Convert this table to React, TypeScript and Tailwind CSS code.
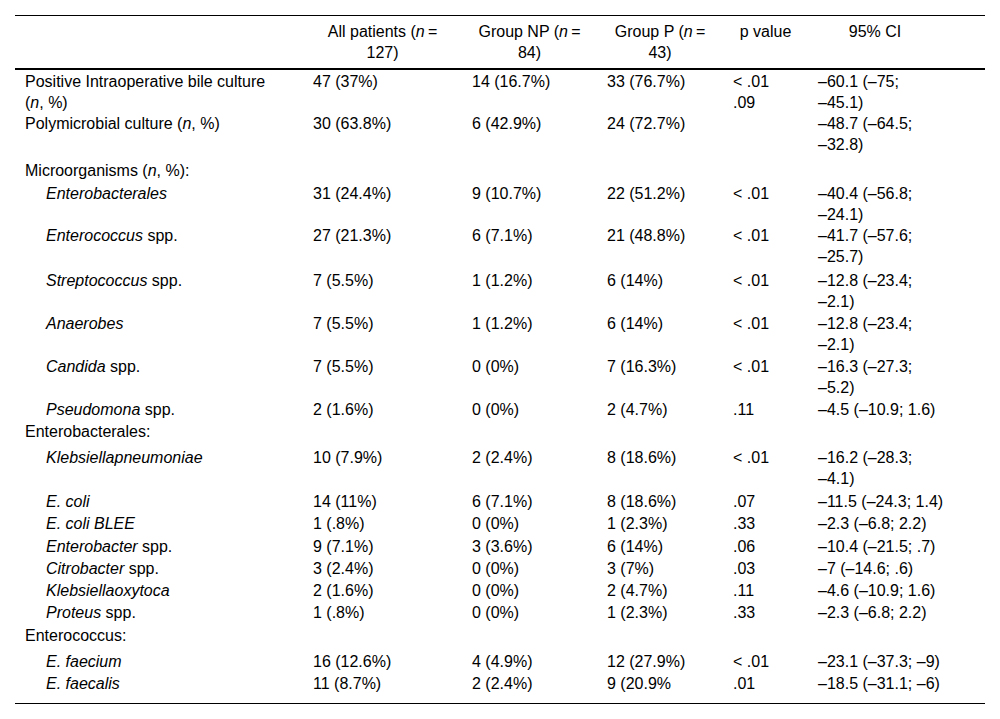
import React from "react";

type Row = {
  label: React.ReactNode;
  indent?: boolean;
  cells?: React.ReactNode[];
  pt: string;
  pb?: string;
};

const rows: Row[] = [
  {
    label: (
      <>
        Positive Intraoperative bile culture
        <br />(<i>n</i>, %)
      </>
    ),
    cells: [
      "47 (37%)",
      "14 (16.7%)",
      "33 (76.7%)",
      <>
        &lt; .01
        <br />
        .09
      </>,
      <>
        –60.1 (–75;
        <br />
        –45.1)
      </>,
    ],
    pt: "pt-[1px]",
  },
  {
    label: (
      <>
        Polymicrobial culture (<i>n</i>, %)
      </>
    ),
    cells: [
      "30 (63.8%)",
      "6 (42.9%)",
      "24 (72.7%)",
      "",
      <>
        –48.7 (–64.5;
        <br />
        –32.8)
      </>,
    ],
    pt: "pt-0",
  },
  {
    label: (
      <>
        Microorganisms (<i>n</i>, %):
      </>
    ),
    pt: "pt-[5px]",
  },
  {
    label: <i>Enterobacterales</i>,
    indent: true,
    cells: [
      "31 (24.4%)",
      "9 (10.7%)",
      "22 (51.2%)",
      "< .01",
      <>
        –40.4 (–56.8;
        <br />
        –24.1)
      </>,
    ],
    pt: "pt-[2px]",
  },
  {
    label: (
      <>
        <i>Enterococcus</i> spp.
      </>
    ),
    indent: true,
    cells: [
      "27 (21.3%)",
      "6 (7.1%)",
      "21 (48.8%)",
      "< .01",
      <>
        –41.7 (–57.6;
        <br />
        –25.7)
      </>,
    ],
    pt: "pt-0",
  },
  {
    label: (
      <>
        <i>Streptococcus</i> spp.
      </>
    ),
    indent: true,
    cells: [
      "7 (5.5%)",
      "1 (1.2%)",
      "6 (14%)",
      "< .01",
      <>
        –12.8 (–23.4;
        <br />
        –2.1)
      </>,
    ],
    pt: "pt-[3px]",
  },
  {
    label: <i>Anaerobes</i>,
    indent: true,
    cells: [
      "7 (5.5%)",
      "1 (1.2%)",
      "6 (14%)",
      "< .01",
      <>
        –12.8 (–23.4;
        <br />
        –2.1)
      </>,
    ],
    pt: "pt-[1px]",
  },
  {
    label: (
      <>
        <i>Candida</i> spp.
      </>
    ),
    indent: true,
    cells: [
      "7 (5.5%)",
      "0 (0%)",
      "7 (16.3%)",
      "< .01",
      <>
        –16.3 (–27.3;
        <br />
        –5.2)
      </>,
    ],
    pt: "pt-[1px]",
  },
  {
    label: (
      <>
        <i>Pseudomona</i> spp.
      </>
    ),
    indent: true,
    cells: ["2 (1.6%)", "0 (0%)", "2 (4.7%)", ".11", "–4.5 (–10.9; 1.6)"],
    pt: "pt-[1px]",
  },
  { label: "Enterobacterales:", pt: "pt-[1px]" },
  {
    label: <i>Klebsiellapneumoniae</i>,
    indent: true,
    cells: [
      "10 (7.9%)",
      "2 (2.4%)",
      "8 (18.6%)",
      "< .01",
      <>
        –16.2 (–28.3;
        <br />
        –4.1)
      </>,
    ],
    pt: "pt-[5px]",
  },
  {
    label: <i>E. coli</i>,
    indent: true,
    cells: ["14 (11%)", "6 (7.1%)", "8 (18.6%)", ".07", "–11.5 (–24.3; 1.4)"],
    pt: "pt-[2px]",
  },
  {
    label: <i>E. coli BLEE</i>,
    indent: true,
    cells: ["1 (.8%)", "0 (0%)", "1 (2.3%)", ".33", "–2.3 (–6.8; 2.2)"],
    pt: "pt-[1px]",
  },
  {
    label: (
      <>
        <i>Enterobacter</i> spp.
      </>
    ),
    indent: true,
    cells: ["9 (7.1%)", "3 (3.6%)", "6 (14%)", ".06", "–10.4 (–21.5; .7)"],
    pt: "pt-[2px]",
  },
  {
    label: (
      <>
        <i>Citrobacter</i> spp.
      </>
    ),
    indent: true,
    cells: ["3 (2.4%)", "0 (0%)", "3 (7%)", ".03", "–7 (–14.6; .6)"],
    pt: "pt-[1px]",
  },
  {
    label: <i>Klebsiellaoxytoca</i>,
    indent: true,
    cells: ["2 (1.6%)", "0 (0%)", "2 (4.7%)", ".11", "–4.6 (–10.9; 1.6)"],
    pt: "pt-[1px]",
  },
  {
    label: (
      <>
        <i>Proteus</i> spp.
      </>
    ),
    indent: true,
    cells: ["1 (.8%)", "0 (0%)", "1 (2.3%)", ".33", "–2.3 (–6.8; 2.2)"],
    pt: "pt-[1px]",
  },
  { label: "Enterococcus:", pt: "pt-[2px]" },
  {
    label: <i>E. faecium</i>,
    indent: true,
    cells: ["16 (12.6%)", "4 (4.9%)", "12 (27.9%)", "< .01", "–23.1 (–37.3; –9)"],
    pt: "pt-[5px]",
  },
  {
    label: <i>E. faecalis</i>,
    indent: true,
    cells: ["11 (8.7%)", "2 (2.4%)", "9 (20.9%", ".01", "–18.5 (–31.1; –6)"],
    pt: "pt-[1px]",
    pb: "pb-[9px]",
  },
];

export default function App() {
  return (
    <div
      className="w-[1000px] h-[719px] bg-white px-[15px] pt-[15px] text-black text-[16px] leading-[21px]"
      style={{ fontFamily: '"Liberation Sans", Arial, sans-serif' }}
    >
      <table className="w-[970px] table-fixed border-collapse border-t border-b border-black">
        <colgroup>
          <col className="w-[288px]" />
          <col className="w-[159px]" />
          <col className="w-[135px]" />
          <col className="w-[126px]" />
          <col className="w-[85px]" />
          <col className="w-[177px]" />
        </colgroup>
        <thead>
          <tr className="border-b-2 border-black">
            <th className="pt-[5px] pb-[5px]"></th>
            <th className="px-[10px] pt-[5px] pb-[5px] text-center font-normal align-top">
              All patients (<i>n</i>&thinsp;=
              <br />
              127)
            </th>
            <th className="px-[10px] pt-[5px] pb-[5px] text-center font-normal align-top">
              Group NP (<i>n</i>&thinsp;=
              <br />
              84)
            </th>
            <th className="px-[10px] pt-[5px] pb-[5px] text-center font-normal align-top">
              Group P (<i>n</i>&thinsp;=
              <br />
              43)
            </th>
            <th className="px-[10px] pt-[5px] pb-[5px] text-center font-normal align-top">
              p value
            </th>
            <th className="pl-[10px] pr-[53px] pt-[5px] pb-[5px] text-center font-normal align-top">
              95% CI
            </th>
          </tr>
        </thead>
        <tbody>
          {rows.map((r, i) => (
            <tr key={i}>
              <td
                className={`${r.indent ? "pl-[31px]" : "pl-[10px]"} pr-[10px] ${r.pt} ${r.pb ?? "pb-0"} align-top`}
              >
                {r.label}
              </td>
              {[0, 1, 2, 3, 4].map((j) => (
                <td
                  key={j}
                  className={`pl-[10px] ${r.pt} ${r.pb ?? "pb-0"} align-top whitespace-nowrap`}
                >
                  {r.cells ? r.cells[j] : ""}
                </td>
              ))}
            </tr>
          ))}
        </tbody>
      </table>
    </div>
  );
}
